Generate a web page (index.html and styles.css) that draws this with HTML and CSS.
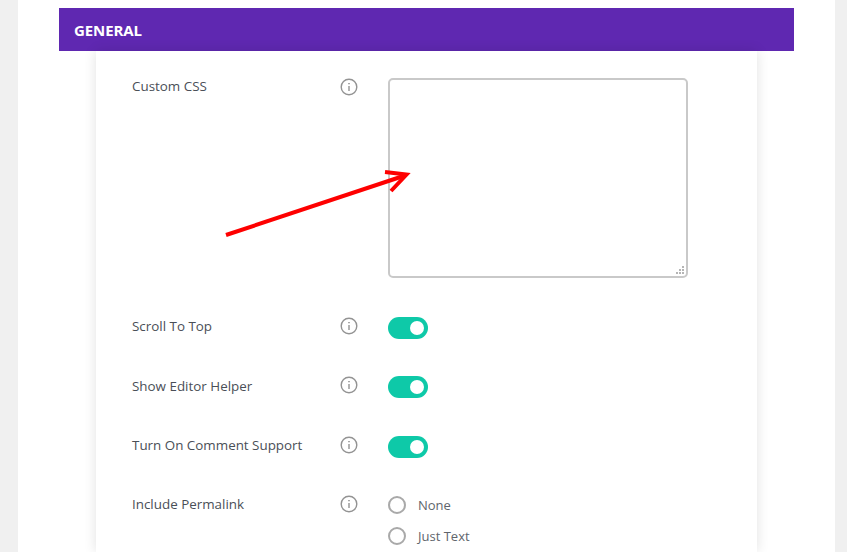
FILE: index.html
```html
<!DOCTYPE html>
<html lang="en">
<head>
<meta charset="utf-8">
<title>General settings</title>
<link rel="stylesheet" href="styles.css">
</head>
<body>
<div class="page">
  <h2 class="section-head">GENERAL</h2>
  <div class="card">
    <div class="row row-first">
      <span class="label label-tight">Custom CSS</span>
      <svg class="info" viewBox="0 0 18 18"><circle cx="9" cy="9" r="7.8"/><path d="M9 8v5"/><path class="dot" d="M9 4.9v1.3"/></svg>
      <div class="resize-box">
        <textarea class="css-input" aria-label="Custom CSS"></textarea>
        <svg class="grip" viewBox="0 0 8 8"><path d="M6 0h2v2H6zM3 3h2v2H3zM6 3h2v2H6zM0 6h2v2H0zM3 6h2v2H3zM6 6h2v2H6z"/></svg>
      </div>
    </div>
    <div class="row">
      <span class="label">Scroll To Top</span>
      <svg class="info" viewBox="0 0 18 18"><circle cx="9" cy="9" r="7.8"/><path d="M9 8v5"/><path class="dot" d="M9 4.9v1.3"/></svg>
      <span class="toggle"><span class="knob"></span></span>
    </div>
    <div class="row">
      <span class="label">Show Editor Helper</span>
      <svg class="info" viewBox="0 0 18 18"><circle cx="9" cy="9" r="7.8"/><path d="M9 8v5"/><path class="dot" d="M9 4.9v1.3"/></svg>
      <span class="toggle"><span class="knob"></span></span>
    </div>
    <div class="row">
      <span class="label">Turn On Comment Support</span>
      <svg class="info" viewBox="0 0 18 18"><circle cx="9" cy="9" r="7.8"/><path d="M9 8v5"/><path class="dot" d="M9 4.9v1.3"/></svg>
      <span class="toggle"><span class="knob"></span></span>
    </div>
    <div class="row">
      <span class="label">Include Permalink</span>
      <svg class="info" viewBox="0 0 18 18"><circle cx="9" cy="9" r="7.8"/><path d="M9 8v5"/><path class="dot" d="M9 4.9v1.3"/></svg>
      <div class="radios">
        <div class="radio"><span class="radio-dot"></span>None</div>
        <div class="radio"><span class="radio-dot"></span>Just Text</div>
      </div>
    </div>
  </div>
  <svg class="arrow" viewBox="0 0 210 80"><path d="M2 70 L181 10.500"/><path d="M161 7 L182.500 9.500 L167 26"/></svg>
</div>
</body>
</html>
```

FILE: styles.css
```css
* { box-sizing: border-box; }
html, body { margin: 0; height: 552px; overflow: hidden; }
body {
  background: #f0f0f0;
  padding: 0 12px 0 18px;
  font-family: "Open Sans", "Noto Sans", sans-serif;
}
.page {
  position: relative;
  background: #fff;
  height: 552px;
  padding: 8px 41px 0;
}
.section-head {
  margin: 0;
  height: 43px;
  padding-left: 15px;
  background: #5f28b1;
  color: #fff;
  font-size: 15px;
  font-weight: 700;
  letter-spacing: -0.1px;
  line-height: 44px;
}
.card {
  margin: 0 37px;
  height: 501px;
  padding: 27px 36px 0;
  background: #fff;
  box-shadow: 0 0 12px rgba(0, 0, 0, .12);
  display: flex;
  flex-direction: column;
  gap: 37.400px;
}
.row {
  display: grid;
  grid-template-columns: 178px 18px auto;
  column-gap: 30px;
  align-items: start;
}
.row-first { margin-bottom: 1.600px; }
.label {
  color: #4a4f57;
  font-size: 13.400px;
  line-height: 18px;
  margin-top: 0.300px;
}
.label-tight { margin-top: -1px; }
.info {
  width: 18px;
  height: 18px;
  fill: none;
  stroke: #939393;
  stroke-width: 1.4;
}
.info .dot { stroke-width: 1.600; }
.resize-box { position: relative; width: 300px; height: 200px; }
.css-input {
  display: block;
  width: 300px;
  height: 200px;
  margin: 0;
  background: #fff;
  border: 2px solid #c9c9c9;
  border-radius: 5px;
  outline: none;
  resize: none;
}
.grip {
  position: absolute;
  right: 4px;
  bottom: 4px;
  width: 8px;
  height: 8px;
  fill: #b5b5b5;
}
.toggle {
  display: flex;
  justify-content: flex-end;
  align-items: center;
  width: 40px;
  height: 22px;
  padding-right: 4px;
  background: #0ec9a8;
  border-radius: 11px;
}
.knob {
  width: 14px;
  height: 14px;
  background: #fff;
  border-radius: 50%;
}
.radios {
  display: flex;
  flex-direction: column;
  gap: 13px;
  margin-top: 0.800px;
}
.radio {
  display: flex;
  align-items: center;
  gap: 12px;
  height: 18px;
  color: #60656c;
  font-size: 13px;
}
.radio-dot {
  width: 18px;
  height: 18px;
  border: 2px solid #a9a9a9;
  border-radius: 50%;
}
.arrow {
  position: absolute;
  left: 206px;
  top: 165px;
  width: 210px;
  height: 80px;
  fill: none;
  stroke: #fe0000;
  stroke-width: 4;
}
```
